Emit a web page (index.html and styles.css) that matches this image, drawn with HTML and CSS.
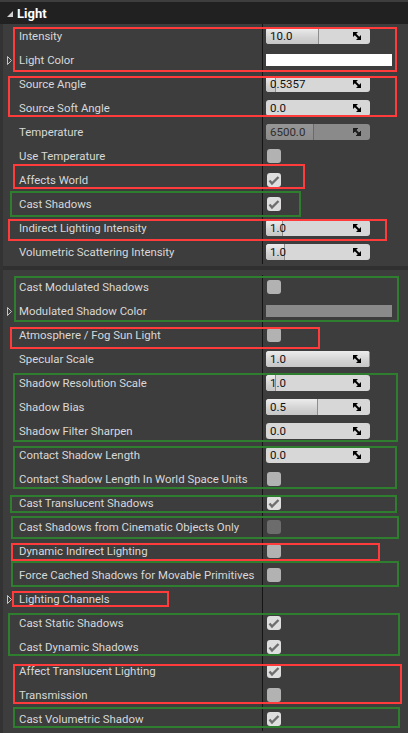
FILE: index.html
```html
<!DOCTYPE html>
<html>
<head>
<meta charset="utf-8">
<link rel="stylesheet" href="styles.css">
</head>
<body>
<div class="panel">
  <div class="topstrip"></div>
  <div class="header">
    <svg class="htri" width="6" height="6" viewBox="0 0 6 6"><polygon points="6,0 6,6 0,6" fill="#d0d0d0"/></svg>
    <span>Light</span>
  </div>
  <div class="body">
    <div class="group">
      <div class="row"><div class="name">Intensity</div><div class="val"><div class="spin"><div class="fill" style="width:53px"></div><span class="num">10.0</span><svg class="arr" width="8" height="8" viewBox="0 0 8 8"><polygon points="0,0 5,0 0,5"/><polygon points="8,3 8,8 3,8"/><line x1="1" y1="1" x2="7" y2="7" stroke="#000" stroke-width="2"/></svg></div></div></div>
      <div class="row"><div class="name"><svg class="exp" width="5" height="9" viewBox="0 0 5 9"><polygon points="0.5,0.5 4.5,4.5 0.5,8.5" fill="none" stroke="#c4c4c4"/></svg>Light Color</div><div class="val"><div class="color white"></div></div></div>
      <div class="row"><div class="name">Source Angle</div><div class="val"><div class="spin"><div class="fill" style="width:10px"></div><span class="num">0.5357</span><svg class="arr" width="8" height="8" viewBox="0 0 8 8"><polygon points="0,0 5,0 0,5"/><polygon points="8,3 8,8 3,8"/><line x1="1" y1="1" x2="7" y2="7" stroke="#000" stroke-width="2"/></svg></div></div></div>
      <div class="row"><div class="name">Source Soft Angle</div><div class="val"><div class="spin"><span class="num">0.0</span><svg class="arr" width="8" height="8" viewBox="0 0 8 8"><polygon points="0,0 5,0 0,5"/><polygon points="8,3 8,8 3,8"/><line x1="1" y1="1" x2="7" y2="7" stroke="#000" stroke-width="2"/></svg></div></div></div>
      <div class="row"><div class="name">Temperature</div><div class="val"><div class="spin dis"><div class="fill" style="width:48px"></div><span class="num">6500.0</span><svg class="arr" width="8" height="8" viewBox="0 0 8 8"><polygon points="0,0 5,0 0,5"/><polygon points="8,3 8,8 3,8"/><line x1="1" y1="1" x2="7" y2="7" stroke="#000" stroke-width="2"/></svg></div></div></div>
      <div class="row"><div class="name">Use Temperature</div><div class="val"><div class="cb"></div></div></div>
      <div class="row"><div class="name">Affects World</div><div class="val"><div class="cb on"><svg width="14" height="14" viewBox="0 0 14 14"><polyline points="2.5,7.5 5,10.5 11.5,4" fill="none" stroke="#6e6e6e" stroke-width="2.4"/></svg></div></div></div>
      <div class="row"><div class="name">Cast Shadows</div><div class="val"><div class="cb on"><svg width="14" height="14" viewBox="0 0 14 14"><polyline points="2.5,7.5 5,10.5 11.5,4" fill="none" stroke="#6e6e6e" stroke-width="2.4"/></svg></div></div></div>
      <div class="row"><div class="name">Indirect Lighting Intensity</div><div class="val"><div class="spin"><div class="fill" style="width:17px"></div><span class="num">1.0</span><svg class="arr" width="8" height="8" viewBox="0 0 8 8"><polygon points="0,0 5,0 0,5"/><polygon points="8,3 8,8 3,8"/><line x1="1" y1="1" x2="7" y2="7" stroke="#000" stroke-width="2"/></svg></div></div></div>
      <div class="row"><div class="name">Volumetric Scattering Intensity</div><div class="val"><div class="spin"><div class="fill" style="width:19px"></div><span class="num">1.0</span><svg class="arr" width="8" height="8" viewBox="0 0 8 8"><polygon points="0,0 5,0 0,5"/><polygon points="8,3 8,8 3,8"/><line x1="1" y1="1" x2="7" y2="7" stroke="#000" stroke-width="2"/></svg></div></div></div>
    </div>
    <div class="sep"><div class="sepband"></div></div>
    <div class="group">
      <div class="row"><div class="name">Cast Modulated Shadows</div><div class="val"><div class="cb"></div></div></div>
      <div class="row"><div class="name"><svg class="exp" width="5" height="9" viewBox="0 0 5 9"><polygon points="0.5,0.5 4.5,4.5 0.5,8.5" fill="none" stroke="#c4c4c4"/></svg>Modulated Shadow Color</div><div class="val"><div class="color gray"></div></div></div>
      <div class="row"><div class="name">Atmosphere / Fog Sun Light</div><div class="val"><div class="cb"></div></div></div>
      <div class="row"><div class="name">Specular Scale</div><div class="val"><div class="spin"><div class="fill" style="width:104px"></div><span class="num">1.0</span><svg class="arr" width="8" height="8" viewBox="0 0 8 8"><polygon points="0,0 5,0 0,5"/><polygon points="8,3 8,8 3,8"/><line x1="1" y1="1" x2="7" y2="7" stroke="#000" stroke-width="2"/></svg></div></div></div>
      <div class="row"><div class="name">Shadow Resolution Scale</div><div class="val"><div class="spin"><div class="fill" style="width:10px"></div><span class="num">1.0</span><svg class="arr" width="8" height="8" viewBox="0 0 8 8"><polygon points="0,0 5,0 0,5"/><polygon points="8,3 8,8 3,8"/><line x1="1" y1="1" x2="7" y2="7" stroke="#000" stroke-width="2"/></svg></div></div></div>
      <div class="row"><div class="name">Shadow Bias</div><div class="val"><div class="spin"><div class="fill" style="width:52px"></div><span class="num">0.5</span><svg class="arr" width="8" height="8" viewBox="0 0 8 8"><polygon points="0,0 5,0 0,5"/><polygon points="8,3 8,8 3,8"/><line x1="1" y1="1" x2="7" y2="7" stroke="#000" stroke-width="2"/></svg></div></div></div>
      <div class="row"><div class="name">Shadow Filter Sharpen</div><div class="val"><div class="spin"><span class="num">0.0</span><svg class="arr" width="8" height="8" viewBox="0 0 8 8"><polygon points="0,0 5,0 0,5"/><polygon points="8,3 8,8 3,8"/><line x1="1" y1="1" x2="7" y2="7" stroke="#000" stroke-width="2"/></svg></div></div></div>
      <div class="row"><div class="name">Contact Shadow Length</div><div class="val"><div class="spin"><span class="num">0.0</span><svg class="arr" width="8" height="8" viewBox="0 0 8 8"><polygon points="0,0 5,0 0,5"/><polygon points="8,3 8,8 3,8"/><line x1="1" y1="1" x2="7" y2="7" stroke="#000" stroke-width="2"/></svg></div></div></div>
      <div class="row"><div class="name">Contact Shadow Length In World Space Units</div><div class="val"><div class="cb"></div></div></div>
      <div class="row"><div class="name">Cast Translucent Shadows</div><div class="val"><div class="cb on"><svg width="14" height="14" viewBox="0 0 14 14"><polyline points="2.5,7.5 5,10.5 11.5,4" fill="none" stroke="#6e6e6e" stroke-width="2.4"/></svg></div></div></div>
      <div class="row"><div class="name">Cast Shadows from Cinematic Objects Only</div><div class="val"><div class="cb dark"></div></div></div>
      <div class="row"><div class="name">Dynamic Indirect Lighting</div><div class="val"><div class="cb"></div></div></div>
      <div class="row"><div class="name">Force Cached Shadows for Movable Primitives</div><div class="val"><div class="cb"></div></div></div>
      <div class="row"><div class="name"><svg class="exp" width="5" height="9" viewBox="0 0 5 9"><polygon points="0.5,0.5 4.5,4.5 0.5,8.5" fill="none" stroke="#c4c4c4"/></svg>Lighting Channels</div><div class="val"></div></div>
      <div class="row"><div class="name">Cast Static Shadows</div><div class="val"><div class="cb on"><svg width="14" height="14" viewBox="0 0 14 14"><polyline points="2.5,7.5 5,10.5 11.5,4" fill="none" stroke="#6e6e6e" stroke-width="2.4"/></svg></div></div></div>
      <div class="row"><div class="name">Cast Dynamic Shadows</div><div class="val"><div class="cb on"><svg width="14" height="14" viewBox="0 0 14 14"><polyline points="2.5,7.5 5,10.5 11.5,4" fill="none" stroke="#6e6e6e" stroke-width="2.4"/></svg></div></div></div>
      <div class="row"><div class="name">Affect Translucent Lighting</div><div class="val"><div class="cb on"><svg width="14" height="14" viewBox="0 0 14 14"><polyline points="2.5,7.5 5,10.5 11.5,4" fill="none" stroke="#6e6e6e" stroke-width="2.4"/></svg></div></div></div>
      <div class="row"><div class="name">Transmission</div><div class="val"><div class="cb"></div></div></div>
      <div class="row"><div class="name">Cast Volumetric Shadow</div><div class="val"><div class="cb on"><svg width="14" height="14" viewBox="0 0 14 14"><polyline points="2.5,7.5 5,10.5 11.5,4" fill="none" stroke="#6e6e6e" stroke-width="2.4"/></svg></div></div></div>
    </div>

    <div class="mark red" style="left:13px;top:27px;width:384px;height:45px"></div>
    <div class="mark red" style="left:8px;top:76px;width:389px;height:41px"></div>
    <div class="mark red" style="left:13px;top:164px;width:292px;height:25px"></div>
    <div class="mark green" style="left:10px;top:191px;width:291px;height:26px"></div>
    <div class="mark red" style="left:8px;top:219px;width:379px;height:22px"></div>
    <div class="mark green" style="left:14px;top:276px;width:385px;height:46px"></div>
    <div class="mark red" style="left:10px;top:327px;width:310px;height:22px"></div>
    <div class="mark green" style="left:13px;top:373px;width:385px;height:69px"></div>
    <div class="mark green" style="left:13px;top:446px;width:384px;height:43px"></div>
    <div class="mark green" style="left:10px;top:495px;width:387px;height:18px"></div>
    <div class="mark green" style="left:11px;top:516px;width:388px;height:23px"></div>
    <div class="mark red" style="left:11px;top:543px;width:369px;height:18px"></div>
    <div class="mark green" style="left:11px;top:561px;width:388px;height:26px"></div>
    <div class="mark red" style="left:12px;top:591px;width:157px;height:16px"></div>
    <div class="mark green" style="left:8px;top:613px;width:392px;height:43px"></div>
    <div class="mark red" style="left:13px;top:664px;width:389px;height:40px"></div>
    <div class="mark green" style="left:13px;top:707px;width:387px;height:21px"></div>
  </div>
</div>
</body>
</html>
```

FILE: styles.css
```css
html, body {
  margin: 0;
  padding: 0;
  background: #3d3d3d;
}
.panel {
  position: relative;
  width: 408px;
  height: 733px;
  overflow: hidden;
  background: #3d3d3d;
  font-family: Roboto, "Liberation Sans", sans-serif;
  font-size: 11.4px;
  color: #d8d8d8;
}
.topstrip {
  height: 2px;
  background: #3e3e3e;
}
.header {
  height: 22px;
  background: #212121;
  display: flex;
  align-items: center;
  padding-left: 7px;
  gap: 4px;
  color: #ffffff;
  font-weight: bold;
  font-size: 13px;
}
.htri {
  margin-top: 1px;
}
.body {
  border-left: 3px solid #333333;
  min-height: 709px;
}
.group {
  display: flex;
  flex-direction: column;
}
.row {
  display: grid;
  grid-template-columns: 260px 1fr;
  height: 24px;
}
.name {
  position: relative;
  border-right: 1px solid #151515;
  display: flex;
  align-items: center;
  padding-left: 16px;
  white-space: nowrap;
  overflow: hidden;
}
.exp {
  position: absolute;
  left: 4px;
  top: 8px;
}
.val {
  display: flex;
  align-items: center;
  padding-left: 3px;
}
.sep {
  height: 11px;
  display: flex;
  flex-direction: column;
}
.sepband {
  margin-top: 2px;
  height: 4px;
  background: #303030;
}
.spin {
  position: relative;
  width: 104px;
  height: 16px;
  border-radius: 3px;
  background: #d7d7d7;
  display: flex;
  align-items: center;
  justify-content: space-between;
  overflow: hidden;
  color: #111111;
}
.spin .fill {
  position: absolute;
  left: 0;
  top: 0;
  bottom: 0;
  background: linear-gradient(#ececec, #d2d2d2 60%, #c6c6c6);
  border-right: 1px solid #8e8e8e;
  box-sizing: border-box;
}
.spin .num {
  position: relative;
  padding-left: 4px;
  font-size: 11.5px;
}
.spin .arr {
  position: relative;
  margin-right: 9px;
}
.spin.dis {
  background: #8a8a8a;
  color: #2e2e2e;
}
.spin.dis .fill {
  background: linear-gradient(#969696, #8c8c8c);
  border-right: 1px solid #6a6a6a;
}
.spin.dis .arr polygon, .spin.dis .arr line {
  fill: #1e1e1e;
  stroke: #1e1e1e;
}
.color {
  width: 126px;
  height: 12px;
}
.color.white {
  background: #ffffff;
}
.color.gray {
  background: #8a8a8a;
}
.cb {
  width: 14px;
  height: 14px;
  margin-left: 1px;
  border-radius: 3px;
  background: #b2b2b2;
}
.cb svg {
  display: block;
}
.cb.on {
  background: #dedede;
}
.cb.dark {
  background: #6c6c6c;
}
.mark {
  position: absolute;
  box-sizing: border-box;
  border: 2px solid;
}
.mark.red {
  border-color: #ff3b3b;
}
.mark.green {
  border-color: #2f7d2f;
}
```
